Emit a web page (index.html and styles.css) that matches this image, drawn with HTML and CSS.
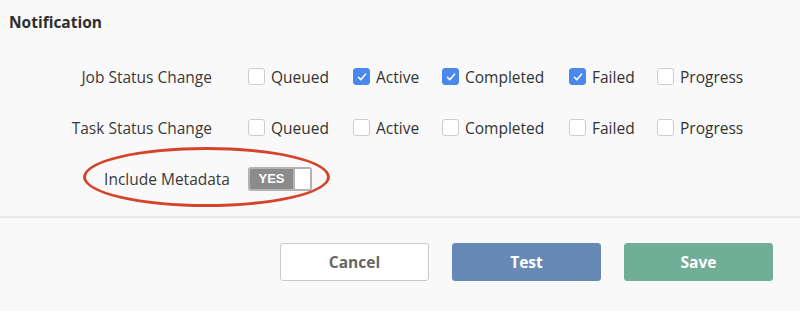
FILE: index.html
```html
<!DOCTYPE html>
<html>
<head>
<meta charset="utf-8">
<link rel="stylesheet" href="styles.css">
</head>
<body>
<div class="page">
  <h2 class="title">Notification</h2>
  <div class="form">
    <div class="row">
      <div class="label">Job Status Change</div>
      <div class="options">
        <label class="opt"><span class="cb"></span>Queued</label>
        <label class="opt"><span class="cb on"><svg viewBox="0 0 16 16"><path d="M4 8.3l2.6 2.8L12 4.8" fill="none" stroke="#fff" stroke-width="1.8" stroke-linecap="round" stroke-linejoin="round"/></svg></span>Active</label>
        <label class="opt"><span class="cb on"><svg viewBox="0 0 16 16"><path d="M4 8.3l2.6 2.8L12 4.8" fill="none" stroke="#fff" stroke-width="1.8" stroke-linecap="round" stroke-linejoin="round"/></svg></span>Completed</label>
        <label class="opt"><span class="cb on"><svg viewBox="0 0 16 16"><path d="M4 8.3l2.6 2.8L12 4.8" fill="none" stroke="#fff" stroke-width="1.8" stroke-linecap="round" stroke-linejoin="round"/></svg></span>Failed</label>
        <label class="opt"><span class="cb"></span>Progress</label>
      </div>
    </div>
    <div class="row">
      <div class="label">Task Status Change</div>
      <div class="options">
        <label class="opt"><span class="cb"></span>Queued</label>
        <label class="opt"><span class="cb"></span>Active</label>
        <label class="opt"><span class="cb"></span>Completed</label>
        <label class="opt"><span class="cb"></span>Failed</label>
        <label class="opt"><span class="cb"></span>Progress</label>
      </div>
    </div>
    <div class="row meta">
      <div class="label wide">Include Metadata</div>
      <div class="options">
        <span class="toggle"><span class="yes">YES</span><span class="knob"></span></span>
      </div>
      <span class="ring"></span>
    </div>
  </div>
  <div class="footer">
    <button class="btn cancel">Cancel</button>
    <button class="btn test">Test</button>
    <button class="btn save">Save</button>
  </div>
</div>
</body>
</html>
```

FILE: styles.css
```css
html, body {
  margin: 0;
  padding: 0;
  background: #f9f9f9;
}
body {
  font-family: "Open Sans", "Liberation Sans", sans-serif;
  color: #333;
  width: 800px;
  height: 311px;
  overflow: hidden;
}
.title {
  margin: 0;
  padding: 12px 9px 0;
  font-size: 15.5px;
  line-height: 20px;
  font-weight: 700;
  color: #2e2e2e;
}
.form {
  padding: 19px 0 12px;
}
.row {
  display: grid;
  grid-template-columns: 212px 1fr;
  column-gap: 36px;
  height: 51px;
  align-items: center;
  position: relative;
}
.label {
  text-align: right;
  font-size: 15.5px;
  color: #3a3a3a;
}
.label.wide {
  margin-right: -18px;
}
.options {
  display: grid;
  grid-template-columns: 105px 89px 127px 88px auto;
  align-items: center;
}
.opt {
  display: flex;
  align-items: center;
  gap: 6px;
  font-size: 15.5px;
  color: #333;
}
.cb {
  box-sizing: border-box;
  width: 17px;
  height: 17px;
  border: 1px solid #cdcdcd;
  border-radius: 3px;
  background: #fff;
  display: inline-flex;
  align-items: center;
  justify-content: center;
}
.cb.on {
  background: #4a88ee;
  border-color: #4a88ee;
}
.cb svg {
  width: 14px;
  height: 14px;
}
.toggle {
  box-sizing: border-box;
  width: 64px;
  height: 24px;
  border: 2px solid #b3b3b3;
  border-radius: 3px;
  display: flex;
  background: #fff;
  overflow: hidden;
}
.yes {
  width: 43px;
  background: #8b8b8b;
  color: #fff;
  font-family: "Liberation Sans", Arial, sans-serif;
  font-weight: 700;
  font-size: 13px;
  line-height: 20px;
  text-align: center;
  border-right: 2px solid #b3b3b3;
}
.knob {
  flex: 1;
  background: #fff;
}
.ring {
  position: absolute;
  left: 83px;
  top: -6px;
  width: 247px;
  height: 60px;
  box-sizing: border-box;
  border: 3px solid #d5432a;
  border-radius: 50%;
  pointer-events: none;
}
.footer {
  border-top: 2px solid #e9e9e9;
  padding: 25px 27px 0 0;
  display: flex;
  justify-content: flex-end;
  gap: 23px;
}
.btn {
  width: 149px;
  height: 38px;
  border-radius: 3px;
  font-family: "Open Sans", "Liberation Sans", sans-serif;
  font-size: 15.5px;
  font-weight: 700;
  border: 1px solid transparent;
  color: #fff;
  padding: 0;
}
.cancel {
  background: #fff;
  border-color: #c9c9c9;
  color: #666;
}
.test {
  background: #6789b6;
  border-color: #6789b6;
}
.save {
  background: #70ae98;
  border-color: #70ae98;
}
```
